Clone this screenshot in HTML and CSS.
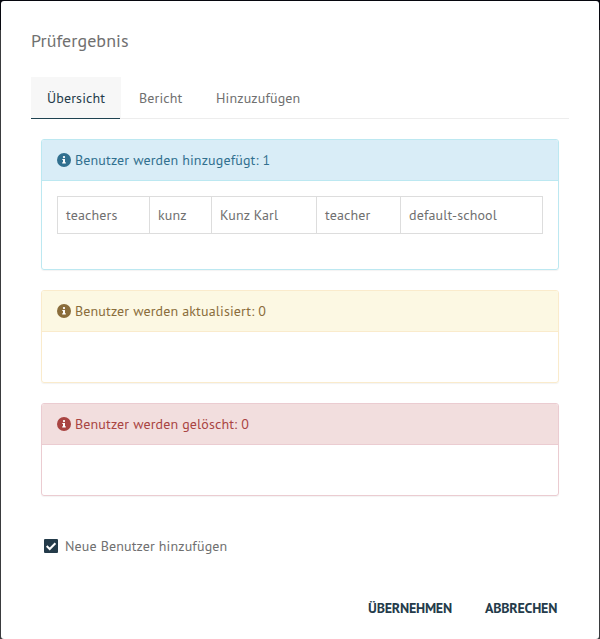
FILE: index.html
```html
<!DOCTYPE html>
<html lang="de">
<head>
<meta charset="utf-8">
<title>Prüfergebnis</title>
<link rel="stylesheet" href="styles.css">
</head>
<body>
<svg class="symbols" aria-hidden="true">
  <symbol id="info" viewBox="0 0 14 14">
    <circle cx="7" cy="7" r="7" fill="currentColor"/>
    <circle cx="7" cy="4.100" r="1.150" fill="#fff"/>
    <path fill="#fff" d="M5.300 6H8v3.300h.8v1.100H5.200V9.300H6V7.100h-.7z"/>
  </symbol>
</svg>
<main class="dialog">
  <h1 class="title"><span>Prüfergebnis</span></h1>
  <nav class="tabs">
    <a class="tab tab-active"><span>Übersicht</span></a>
    <a class="tab tab-report"><span>Bericht</span></a>
    <a class="tab tab-add"><span>Hinzuzufügen</span></a>
  </nav>
  <div class="panels">
    <section class="panel panel-info">
      <h2 class="panel-heading"><svg class="icon"><use href="#info"/></svg><span>Benutzer werden hinzugefügt: 1</span></h2>
      <div class="panel-body">
        <table class="users">
          <colgroup><col class="c1"><col class="c2"><col class="c3"><col class="c4"><col></colgroup>
          <tr><td>teachers</td><td>kunz</td><td>Kunz Karl</td><td>teacher</td><td>default-school</td></tr>
        </table>
      </div>
    </section>
    <section class="panel panel-warning">
      <h2 class="panel-heading"><svg class="icon"><use href="#info"/></svg><span>Benutzer werden aktualisiert: 0</span></h2>
      <div class="panel-body"></div>
    </section>
    <section class="panel panel-danger">
      <h2 class="panel-heading"><svg class="icon"><use href="#info"/></svg><span>Benutzer werden gelöscht: 0</span></h2>
      <div class="panel-body"></div>
    </section>
  </div>
  <label class="option">
    <svg class="checkbox" viewBox="0 0 14 14"><rect width="14" height="14" rx="1" fill="#243b4a"/><path d="M2.700 7l3 3L11.400 4.300" fill="none" stroke="#fff" stroke-width="2"/></svg>
    <span>Neue Benutzer hinzufügen</span>
  </label>
  <footer class="actions">
    <button class="button button-apply">ÜBERNEHMEN</button>
    <button class="button button-cancel">ABBRECHEN</button>
  </footer>
</main>
</body>
</html>
```

FILE: styles.css
```css
* { box-sizing: border-box; }
body {
  margin: 0;
  padding: 1px 1px 0;
  height: 639px;
  overflow: hidden;
  background: linear-gradient(#06070e 30px, #3a3b3e 30px);
  font: 14px/20px "PT Sans", "Noto Sans", sans-serif;
  letter-spacing: .14px;
  color: #707070;
}
.symbols { display: none; }
.dialog {
  height: 638px;
  padding: 28px 30px 0;
  background: #fff;
  border-radius: 3px;
}
.title { margin: 0; font-size: 18px; line-height: 24px; font-weight: 400; letter-spacing: .06px; }
.tabs {
  display: flex;
  height: 42px;
  margin-top: 24px;
  border-bottom: 1px solid #ededed;
}
.tab { height: 42px; padding: 11px 0 0 16px; white-space: nowrap; }
.tab-active {
  width: 90px;
  background: linear-gradient(#1e4250, #1e4250) 0 100% / 89px 1px no-repeat, linear-gradient(#f7f7f7, #f7f7f7) 0 0 / 90px 41px no-repeat;
  color: #243b4a;
}
.tab-report { width: 77px; padding-left: 18px; }
.tab-add { padding-left: 18px; }
.panels { padding: 20px 10px 0; }
.panel {
  margin-bottom: 20px;
  border: 1px solid;
  border-radius: 3px;
  box-shadow: 0 1px 1px rgba(0, 0, 0, .05);
}
.panel-heading {
  display: flex;
  gap: 4px;
  height: 41px;
  margin: 0;
  padding: 10px 15px;
  border-bottom: 1px solid;
  border-color: inherit;
  border-radius: 2px 2px 0 0;
  font-size: 14px;
  font-weight: 400;
  white-space: nowrap;
}
.icon { width: 14px; height: 14px; margin-top: 3px; }
.panel-body { height: 50px; padding: 15px; }
.panel-info { border-color: #bce8f1; }
.panel-info .panel-heading { background: #d9edf7; color: #31708f; }
.panel-info .panel-body { height: 88px; }
.panel-warning { border-color: #faebcc; }
.panel-warning .panel-heading { background: #fcf8e3; color: #8a6d3b; }
.panel-danger { border-color: #ebccd1; }
.panel-danger .panel-heading { background: #f2dede; color: #a94442; }
.users { width: 486px; table-layout: fixed; border-collapse: collapse; }
.users td { height: 37px; padding: 0 8px; border: 1px solid #ddd; white-space: nowrap; }
.c1 { width: 92px; }
.c2 { width: 62px; }
.c3 { width: 105px; }
.c4 { width: 84px; }
.option { display: flex; gap: 7px; height: 20px; margin: 40px 0 0 13px; white-space: nowrap; }
.checkbox { width: 14px; height: 14px; margin-top: 3px; }
.actions { display: flex; justify-content: flex-end; gap: 33px; margin: 42px 12px 0 0; }
.button {
  padding: 0;
  border: 0;
  background: none;
  color: #243b4a;
  font: 700 14px/20px "PT Sans", "Noto Sans", sans-serif;
  letter-spacing: -.23px;
  white-space: nowrap;
}
.button-apply { width: 84px; }
.button-cancel { width: 72px; }
```
